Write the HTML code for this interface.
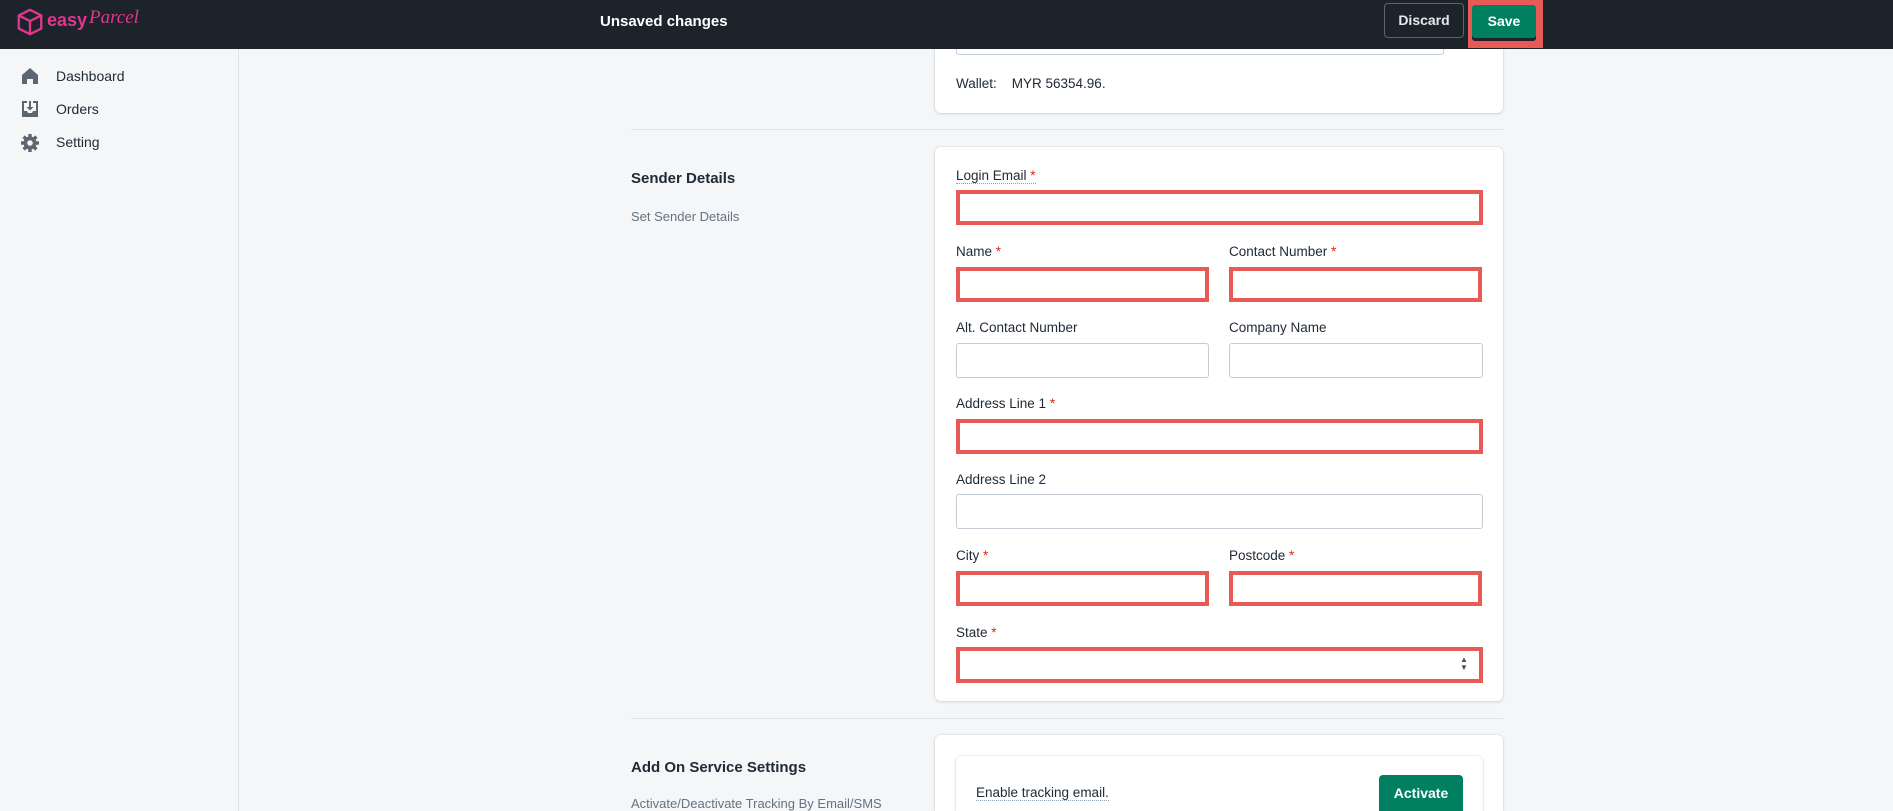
<!DOCTYPE html>
<html style="width:1893px;height:811px;overflow:hidden"><head><meta charset="utf-8"><style>
*{box-sizing:border-box;margin:0;padding:0}
body{width:1893px;height:811px;overflow:hidden;background:#f4f6f8;font-family:"Liberation Sans",sans-serif;color:#212b36;position:relative}
.a{position:absolute}
.top{left:0;top:0;width:1893px;height:49px;background:#1c232b;z-index:5}
.z{z-index:6}
.side{left:0;top:49px;width:239px;height:762px;background:#f4f6f8;border-right:1px solid #dfe3e8}
.nav{left:56px;font-size:14px;color:#212b36}
.card{background:#fff;border-radius:6px;box-shadow:0 0 0 1px rgba(63,63,68,.05),0 1px 3px rgba(63,63,68,.15)}
.lbl{font-size:13.5px;color:#212b36}
.req{color:#d72c0d}
.in{background:#fff;border:1px solid #c4cdd5;border-radius:3px}
.err{border:4px solid #e85a56;border-radius:0;background:#fff}
.hr{left:631px;width:872px;height:1px;background:#dfe3e8}
</style></head><body>
<div class="a top"></div>
<svg class="a z" style="left:15px;top:7px" width="30" height="30" viewBox="0 0 32 32"><path d="M16 3 L28 9 V23 L16 29 L4 23 V9 Z M4 9 L16 15 L28 9 M16 15 V29" fill="none" stroke="#e0368c" stroke-width="2.5" stroke-linejoin="round"/></svg>
<div class="a z" style="left:47px;top:10px;font-size:18px;font-weight:bold;color:#e0368c">easy</div>
<div class="a z" style="left:89px;top:7px;font-size:19px;font-style:italic;font-family:'Liberation Serif',serif;color:#e0368c">Parcel</div>
<div class="a z" style="left:600px;top:13px;font-size:15px;font-weight:bold;color:#fff">Unsaved changes</div>
<div class="a z" style="left:1384px;top:3px;width:80px;height:35px;border:1px solid #5c6670;border-radius:4px;color:#e6e9ec;font-weight:bold;font-size:14px;text-align:center;line-height:33px">Discard</div>
<div class="a z" style="left:1468px;top:0;width:75px;height:48px;background:#e85a56"></div>
<div class="a z" style="left:1472px;top:5px;width:64px;height:33px;background:#008060;border-radius:3px;color:#fff;font-weight:bold;font-size:14px;text-align:center;line-height:33px;box-shadow:0 3px 0 #1c232b">Save</div>
<div class="a side"></div>
<svg class="a" style="left:21px;top:67px" width="18" height="18" viewBox="0 0 18 18"><path d="M9 1 L17 8 V17 H12 V12 H6 V17 H1 V8 Z" fill="#5c6670"/></svg>
<div class="a nav" style="top:68px">Dashboard</div>
<svg class="a" style="left:21px;top:100px" width="18" height="18" viewBox="0 0 18 18"><path d="M1 1 H6 V3 H3 V11 H6 L7 13 H11 L12 11 H15 V3 H12 V1 H17 V17 H1 Z" fill="#5c6670"/><path d="M8 1 H10 V7 H12.5 L9 10.5 L5.5 7 H8 Z" fill="#5c6670"/></svg>
<div class="a nav" style="top:101px">Orders</div>
<svg class="a" style="left:20px;top:133px" width="20" height="20" viewBox="0 0 20 20"><g fill="#5c6670"><circle cx="10" cy="10" r="6.5"/><rect x="8.3" y="1" width="3.4" height="18"/><rect x="8.3" y="1" width="3.4" height="18" transform="rotate(45 10 10)"/><rect x="8.3" y="1" width="3.4" height="18" transform="rotate(90 10 10)"/><rect x="8.3" y="1" width="3.4" height="18" transform="rotate(135 10 10)"/></g><circle cx="10" cy="10" r="2.8" fill="#f4f6f8"/></svg>
<div class="a nav" style="top:134px">Setting</div>
<div class="a card" style="left:935px;top:30px;width:568px;height:83px"></div>
<div class="a in" style="left:956px;top:30px;width:488px;height:25px"></div>
<div class="a" style="left:956px;top:76px;font-size:13.5px">Wallet:&nbsp;&nbsp;&nbsp; MYR 56354.96.</div>
<div class="a hr" style="top:129px"></div>
<div class="a" style="left:631px;top:170px;font-size:15px;font-weight:bold">Sender Details</div>
<div class="a" style="left:631px;top:209px;font-size:13px;color:#637381">Set Sender Details</div>
<div class="a card" style="left:935px;top:147px;width:568px;height:554px"></div>
<div class="a lbl" style="left:956px;top:168px;border-bottom:1px dotted #919eab">Login Email <span class="req">*</span></div>
<div class="a err" style="left:956px;top:190px;width:527px;height:35px"></div>
<div class="a lbl" style="left:956px;top:244px">Name <span class="req">*</span></div>
<div class="a lbl" style="left:1229px;top:244px">Contact Number <span class="req">*</span></div>
<div class="a err" style="left:956px;top:267px;width:253px;height:35px"></div>
<div class="a err" style="left:1229px;top:267px;width:253px;height:35px"></div>
<div class="a lbl" style="left:956px;top:320px">Alt. Contact Number</div>
<div class="a lbl" style="left:1229px;top:320px">Company Name</div>
<div class="a in" style="left:956px;top:343px;width:253px;height:35px"></div>
<div class="a in" style="left:1229px;top:343px;width:254px;height:35px"></div>
<div class="a lbl" style="left:956px;top:396px">Address Line 1 <span class="req">*</span></div>
<div class="a err" style="left:956px;top:419px;width:527px;height:35px"></div>
<div class="a lbl" style="left:956px;top:472px">Address Line 2</div>
<div class="a in" style="left:956px;top:494px;width:527px;height:35px"></div>
<div class="a lbl" style="left:956px;top:548px">City <span class="req">*</span></div>
<div class="a lbl" style="left:1229px;top:548px">Postcode <span class="req">*</span></div>
<div class="a err" style="left:956px;top:571px;width:253px;height:35px"></div>
<div class="a err" style="left:1229px;top:571px;width:253px;height:35px"></div>
<div class="a lbl" style="left:956px;top:625px">State <span class="req">*</span></div>
<div class="a err" style="left:956px;top:647px;width:527px;height:36px"></div>
<div class="a" style="left:1460px;top:656px;font-size:8px;line-height:8px;color:#454f5b">▲<br>▼</div>
<div class="a hr" style="top:718px"></div>
<div class="a" style="left:631px;top:759px;font-size:15px;font-weight:bold">Add On Service Settings</div>
<div class="a" style="left:631px;top:796px;font-size:13px;color:#637381">Activate/Deactivate Tracking By Email/SMS</div>
<div class="a card" style="left:935px;top:735px;width:568px;height:76px;border-radius:6px 6px 0 0"></div>
<div class="a card" style="left:956px;top:756px;width:527px;height:55px;border-radius:6px 6px 0 0"></div>
<div class="a lbl" style="left:976px;top:785px;border-bottom:1px dotted #919eab">Enable tracking email.</div>
<div class="a" style="left:1379px;top:775px;width:84px;height:36px;background:#008060;border-radius:4px 4px 0 0;color:#fff;font-weight:bold;font-size:14px;text-align:center;line-height:36px">Activate</div>
</body></html>
